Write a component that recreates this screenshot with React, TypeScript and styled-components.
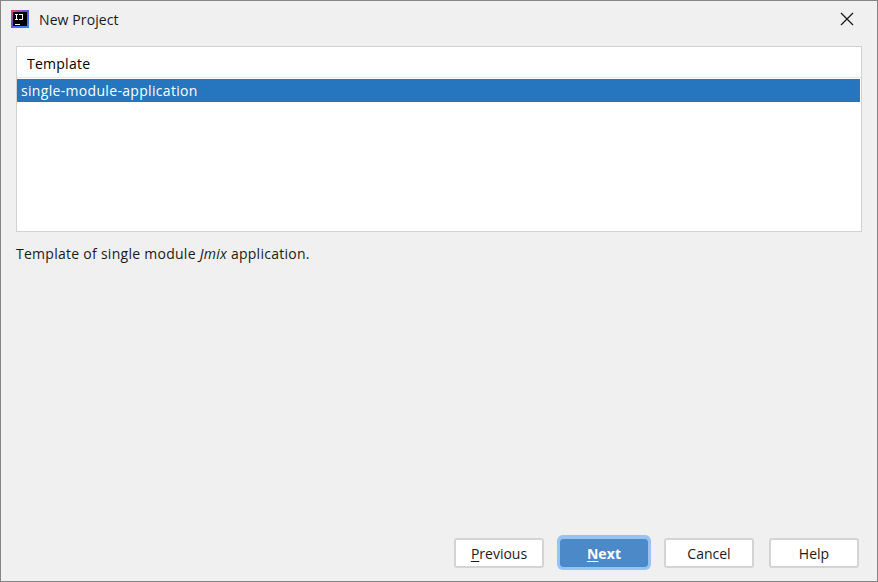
import React from 'react'
import styled, { createGlobalStyle } from 'styled-components'

const GlobalStyle = createGlobalStyle`
  html, body {
    margin: 0;
    padding: 0;
    background: #f0f0f0;
  }
  body {
    font-family: "Open Sans", "Noto Sans", "Liberation Sans", sans-serif;
    font-size: 14px;
    color: #000;
  }
`

const Dialog = styled.div`
  box-sizing: border-box;
  width: 878px;
  height: 582px;
  display: flex;
  flex-direction: column;
  background: #f0f0f0;
  border: 1px solid #858585;
`

const TitleBar = styled.div`
  height: 36px;
  display: flex;
  align-items: center;
  padding: 0 23px 0 10px;
  flex: none;
`

const Title = styled.span`
  margin-left: 10px;
  letter-spacing: 0.1px;
  color: #1a1a1a;
`

const CloseButton = styled.button`
  margin-left: auto;
  width: 14px;
  height: 14px;
  padding: 0;
  border: 0;
  background: none;
  display: flex;
`

const Content = styled.div`
  flex: 1;
  display: flex;
  flex-direction: column;
  padding: 9px 15px 0;
`

const TableBox = styled.div`
  height: 186px;
  box-sizing: border-box;
  background: #fff;
  border: 1px solid #d0d0d0;
  flex: none;
`

const TableHeader = styled.div`
  height: 31px;
  box-sizing: border-box;
  padding: 3px 0 0 10px;
  display: flex;
  align-items: center;
  border-bottom: 1px solid #e6e6e6;
  letter-spacing: 0.25px;
`

const TableRow = styled.div<{ $selected?: boolean }>`
  height: 23px;
  margin: 1px 1px 0 0;
  padding-left: 4px;
  display: flex;
  align-items: center;
  letter-spacing: 0.32px;
  color: ${p => (p.$selected ? '#fff' : '#000')};
  background: ${p => (p.$selected ? '#2675bf' : 'transparent')};
`

const Description = styled.p`
  margin: 12px 0 0;
  line-height: 20px;
  letter-spacing: 0.27px;
  color: #1a1a1a;
`

const Footer = styled.div`
  margin-top: auto;
  padding: 0 3px 13px 0;
  display: flex;
  justify-content: flex-end;
  gap: 15px;
`

const Button = styled.button<{ $primary?: boolean }>`
  box-sizing: border-box;
  width: ${p => (p.$primary ? '88px' : '90px')};
  height: ${p => (p.$primary ? '28px' : '30px')};
  margin: ${p => (p.$primary ? '1px' : '0')};
  padding: 0;
  border-radius: 3px;
  font-family: inherit;
  font-size: 14px;
  font-weight: ${p => (p.$primary ? 700 : 400)};
  letter-spacing: ${p => (p.$primary ? '0.1px' : '0')};
  color: ${p => (p.$primary ? '#fff' : '#1a1a1a')};
  background: ${p => (p.$primary ? '#4c89c9' : '#fff')};
  border: ${p => (p.$primary ? '1px solid #4c89c9' : '2px solid #d4d4d4')};
  box-shadow: ${p => (p.$primary ? '0 0 0 3px #97c3f3, 0 -1px 0 3px #97c3f3' : 'none')};

  u {
    text-underline-offset: 2px;
  }
`

const IdeaIcon = () => (
  <svg width="18" height="18" viewBox="0 0 18 18">
    <defs>
      <linearGradient id="ij" x1="0" y1="0" x2="1" y2="1">
        <stop offset="0" stopColor="#f0467f" />
        <stop offset="0.45" stopColor="#5b55d8" />
        <stop offset="1" stopColor="#2f8cff" />
      </linearGradient>
    </defs>
    <rect x="0" y="0" width="18" height="18" fill="url(#ij)" />
    <rect x="2" y="2" width="14" height="14" fill="#000" />
    <path d="M4 4h3v1H6v4h1v1H4V9h1V5H4zM8 4h4v5q0 1-1 1H8V9h3V5H8z" fill="#fff" />
    <rect x="4" y="14" width="5" height="1" fill="#fff" />
  </svg>
)

const CloseIcon = () => (
  <svg width="14" height="14" viewBox="0 0 14 14">
    <path d="M1 1l12 12M13 1L1 13" stroke="#1a1a1a" strokeWidth="1.300" fill="none" />
  </svg>
)

export default function App(): JSX.Element {
  return (
    <>
      <GlobalStyle />
      <Dialog>
        <TitleBar>
          <IdeaIcon />
          <Title>New Project</Title>
          <CloseButton aria-label="Close">
            <CloseIcon />
          </CloseButton>
        </TitleBar>
        <Content>
          <TableBox>
            <TableHeader>Template</TableHeader>
            <TableRow $selected>single-module-application</TableRow>
          </TableBox>
          <Description>
            Template of single module <em>Jmix</em> application.
          </Description>
          <Footer>
            <Button>
              <u>P</u>revious
            </Button>
            <Button $primary>
              <u>N</u>ext
            </Button>
            <Button>Cancel</Button>
            <Button>Help</Button>
          </Footer>
        </Content>
      </Dialog>
    </>
  )
}
